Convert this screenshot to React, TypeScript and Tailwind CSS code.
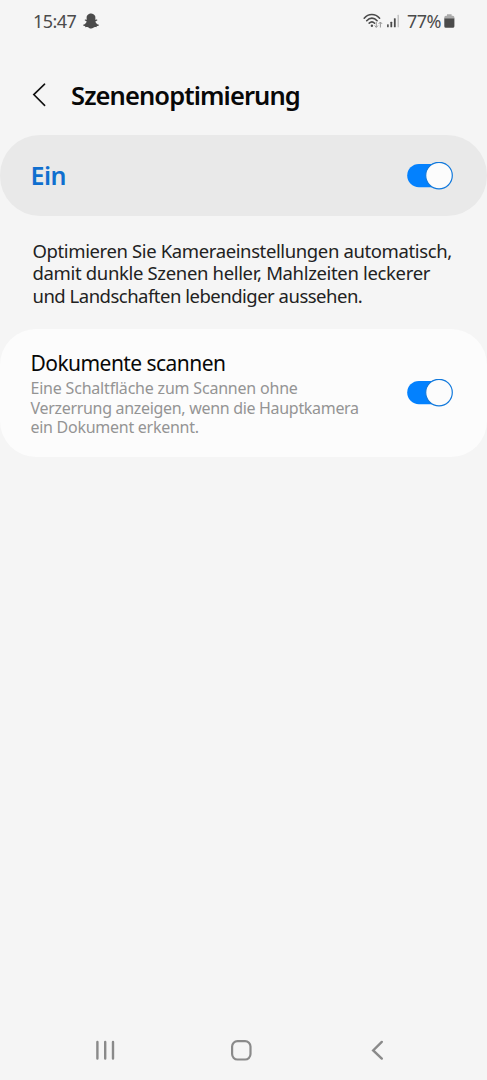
import React from "react";
import { FaSnapchatGhost } from "react-icons/fa";

const Line: React.FC<{ className: string; children: React.ReactNode }> = ({
  className,
  children,
}) => <span className={`block w-max whitespace-nowrap ${className}`}>{children}</span>;

const Toggle: React.FC = () => (
  <button
    type="button"
    role="switch"
    aria-checked="true"
    className="flex h-[28px] w-[46px] shrink-0 items-center"
  >
    <svg width="46" height="28" viewBox="0 0 46 28" fill="none">
      <rect x="0.2" y="1.9" width="44" height="23.4" rx="11.7" fill="#0381fe" />
      <circle cx="32" cy="13.6" r="13.3" fill="#fcfcfc" stroke="#1279dc" strokeWidth="1.2" />
    </svg>
  </button>
);

const StatusBar: React.FC = () => (
  <div className="flex h-[42px] items-center justify-between pl-[33px] pr-[32px] text-[#4b4b4b]">
    <div className="flex items-center gap-[7px]">
      <Line className="text-[18px] leading-[24px] tracking-[-0.55px]">15:47</Line>
      <FaSnapchatGhost size={16} />
    </div>
    <div className="flex items-center">
      <svg width="38" height="18" viewBox="0 0 38 18" fill="none">
        <g stroke="#4b4b4b" strokeWidth="1.6" strokeLinecap="round">
          <path d="M1.2 6.2C5.4 1.3 12.2 1.3 16.6 6.2" />
          <path d="M3.7 8.7C6.9 5.3 11 5.3 14.1 8.7" />
          <path d="M6.2 11.2C8 9.5 9.9 9.5 11.6 11.2" />
        </g>
        <circle cx="8.9" cy="13.7" r="1.2" fill="#4b4b4b" />
        <g stroke="#999" strokeWidth="1">
          <path d="M13.3 10v5.3M11.6 13.5l1.7 1.9 1.7-1.9" />
          <path d="M17.4 15.5V10M15.7 11.9l1.7-1.9 1.7 1.9" />
        </g>
        <g fill="#4b4b4b">
          <rect x="24.1" y="12.3" width="1.6" height="3" rx="0.5" />
          <rect x="27.4" y="9.8" width="1.8" height="5.5" rx="0.5" />
          <rect x="30.9" y="6.3" width="1.8" height="9" rx="0.5" />
          <rect x="34.5" y="2.8" width="1.5" height="12.5" rx="0.5" fill="#c4c4c4" />
        </g>
      </svg>
      <Line className="ml-[6px] text-[18px] leading-[24px] tracking-[-0.55px]">77%</Line>
      <svg className="ml-[3px]" width="11" height="16" viewBox="0 0 11 16">
        <path d="M3 1.2h4.6v1.5h1.2a1.6 1.6 0 0 1 1.6 1.6V6H.3V4.3a1.6 1.6 0 0 1 1.6-1.6H3z" fill="#aaa" />
        <path d="M.3 5.5h10.1v7.7a1.6 1.6 0 0 1-1.6 1.6H1.9a1.6 1.6 0 0 1-1.6-1.6z" fill="#4b4b4b" />
      </svg>
    </div>
  </div>
);

const NavBar: React.FC = () => (
  <nav className="flex h-[60px] items-center pl-[95px] text-[#8a8a8a]">
    <svg width="20" height="22" viewBox="0 0 20 22" stroke="currentColor" strokeWidth="2.4" strokeLinecap="round">
      <path d="M2.4 3v16.5M10.2 3v16.5M18 3v16.5" />
    </svg>
    <svg className="ml-[115px]" width="23" height="22" viewBox="0 0 23 22" fill="none" stroke="currentColor" strokeWidth="2.2">
      <rect x="2.1" y="2.1" width="18.4" height="18.4" rx="5.4" />
    </svg>
    <svg className="ml-[117px]" width="16" height="22" viewBox="0 0 16 22" fill="none" stroke="currentColor" strokeWidth="2.4" strokeLinecap="round">
      <path d="M11.8 2.9 3.2 11.4l8.6 8.2" />
    </svg>
  </nav>
);

export default function App() {
  return (
    <div className="flex h-[1080px] w-[487px] flex-col overflow-hidden bg-[#f5f5f5] font-['Noto_Sans','Open_Sans',sans-serif]">
      <StatusBar />
      <header className="flex h-[93px] items-center pb-[5px] pt-[18px] pl-[31px]">
        <svg width="16" height="26" viewBox="0 0 16 26" fill="none" stroke="#111" strokeWidth="1.6" strokeLinecap="round">
          <path d="M13.6 2.2 2.8 12.6l10.8 10.8" />
        </svg>
        <h1 className="ml-[24px] text-[#080808]">
          <Line className="text-[25.5px] font-semibold leading-[32px] tracking-[-0.9px]">Szenenoptimierung</Line>
        </h1>
      </header>

      <main className="flex flex-1 flex-col">
        <section className="flex h-[81px] items-center justify-between rounded-[40px] bg-[#e9e9e9] pl-[30.5px] pr-[34px]">
          <Line className="pb-[2px] text-[25px] font-semibold leading-[32px] tracking-[-0.5px] text-[#0f6fcf]">Ein</Line>
          <Toggle />
        </section>

        <p className="mt-[24px] pl-[32.5px] text-[18.5px] leading-[22.4px] text-[#222]">
          <Line className="tracking-[-0.38px]">Optimieren Sie Kameraeinstellungen automatisch,</Line>
          <Line className="tracking-[-0.34px]">damit dunkle Szenen heller, Mahlzeiten leckerer</Line>
          <Line className="tracking-[-0.5px]">und Landschaften lebendiger aussehen.</Line>
        </p>

        <section className="mt-[22px] flex h-[128px] items-center justify-between rounded-[36px] bg-[#fcfcfc] pl-[30.5px] pr-[34px]">
          <div>
            <Line className="text-[21px] leading-[28px] tracking-[-0.55px] text-[#080808]">Dokumente scannen</Line>
            <div className="mt-[2px] text-[16px] leading-[19.2px] text-[#949494]">
              <Line className="tracking-[-0.2px]">Eine Schaltfläche zum Scannen ohne</Line>
              <Line className="tracking-[-0.31px]">Verzerrung anzeigen, wenn die Hauptkamera</Line>
              <Line className="tracking-[-0.27px]">ein Dokument erkennt.</Line>
            </div>
          </div>
          <Toggle />
        </section>
      </main>

      <NavBar />
    </div>
  );
}
